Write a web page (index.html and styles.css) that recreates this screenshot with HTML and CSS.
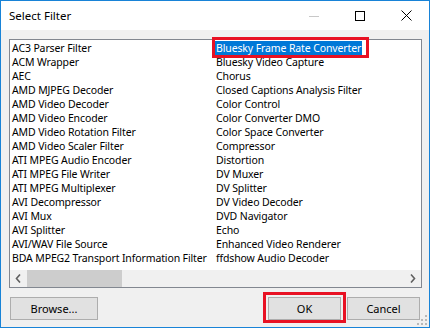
FILE: index.html
```html
<!DOCTYPE html>
<html>
<head>
<meta charset="utf-8">
<link rel="stylesheet" href="styles.css">
</head>
<body>
<div class="window">
  <div class="titlebar">
    <span class="title">Select Filter</span>
    <div class="caps">
      <div class="cap"><svg width="10" height="10" viewBox="0 0 10 10"><path d="M0 5.5H10" stroke="#c8c8c8" stroke-width="1"/></svg></div>
      <div class="cap"><svg width="10" height="10" viewBox="0 0 10 10"><rect x="0.5" y="0.5" width="9" height="9" fill="none" stroke="#000" stroke-width="1"/></svg></div>
      <div class="cap"><svg width="11" height="11" viewBox="0 0 11 11"><path d="M0.5 0.5L10.5 10.5M10.5 0.5L0.5 10.5" stroke="#000" stroke-width="1"/></svg></div>
    </div>
  </div>
  <div class="content">
    <div class="listbox">
      <div class="items">
        <div class="item">AC3 Parser Filter</div>
        <div class="item">ACM Wrapper</div>
        <div class="item">AEC</div>
        <div class="item">AMD MJPEG Decoder</div>
        <div class="item">AMD Video Decoder</div>
        <div class="item">AMD Video Encoder</div>
        <div class="item">AMD Video Rotation Filter</div>
        <div class="item">AMD Video Scaler Filter</div>
        <div class="item">ATI MPEG Audio Encoder</div>
        <div class="item">ATI MPEG File Writer</div>
        <div class="item">ATI MPEG Multiplexer</div>
        <div class="item">AVI Decompressor</div>
        <div class="item">AVI Mux</div>
        <div class="item">AVI Splitter</div>
        <div class="item">AVI/WAV File Source</div>
        <div class="item">BDA MPEG2 Transport Information Filter</div>
        <div class="item"><span class="sel">Bluesky Frame Rate Converter</span></div>
        <div class="item">Bluesky Video Capture</div>
        <div class="item">Chorus</div>
        <div class="item">Closed Captions Analysis Filter</div>
        <div class="item">Color Control</div>
        <div class="item">Color Converter DMO</div>
        <div class="item">Color Space Converter</div>
        <div class="item">Compressor</div>
        <div class="item">Distortion</div>
        <div class="item">DV Muxer</div>
        <div class="item">DV Splitter</div>
        <div class="item">DV Video Decoder</div>
        <div class="item">DVD Navigator</div>
        <div class="item">Echo</div>
        <div class="item">Enhanced Video Renderer</div>
        <div class="item">ffdshow Audio Decoder</div>
      </div>
      <div class="hscroll">
        <div class="arrow"><svg width="7" height="9" viewBox="0 0 7 9"><path d="M5 0.5L1.5 4.5L5 8.5" fill="none" stroke="#606060" stroke-width="1.6"/></svg></div>
        <div class="track"><div class="thumb"></div></div>
        <div class="arrow"><svg width="7" height="9" viewBox="0 0 7 9"><path d="M2 0.5L5.5 4.5L2 8.5" fill="none" stroke="#606060" stroke-width="1.6"/></svg></div>
      </div>
      <div class="mark mark-sel"></div>
    </div>
    <div class="buttons">
      <button class="btn browse">Browse...</button>
      <div class="spacer"></div>
      <div class="okwrap">
        <button class="btn">OK</button>
        <div class="mark mark-ok"></div>
      </div>
      <button class="btn">Cancel</button>
    </div>
    <svg class="grip" width="10" height="10" viewBox="0 0 10 10">
      <rect x="8" y="0" width="2" height="2" fill="#b8b8b8"/>
      <rect x="4" y="4" width="2" height="2" fill="#b8b8b8"/>
      <rect x="8" y="4" width="2" height="2" fill="#b8b8b8"/>
      <rect x="0" y="8" width="2" height="2" fill="#b8b8b8"/>
      <rect x="4" y="8" width="2" height="2" fill="#b8b8b8"/>
      <rect x="8" y="8" width="2" height="2" fill="#b8b8b8"/>
    </svg>
  </div>
</div>
</body>
</html>
```
FILE: styles.css
```css
* { box-sizing: border-box; }
html, body { margin: 0; padding: 0; }
body {
  width: 430px;
  height: 328px;
  font-family: "Noto Sans", "Open Sans", sans-serif;
  font-size: 10.5px;
  letter-spacing: -0.12px;
  color: #000;
  background: #fff;
}
.window {
  width: 430px;
  height: 328px;
  border: 1px solid #1883d7;
  display: flex;
  flex-direction: column;
}
.titlebar {
  height: 29px;
  background: #fff;
  display: flex;
  align-items: center;
  padding-left: 8px;
}
.title {
  font-size: 11.5px;
  letter-spacing: 0;
  color: #000;
  padding-bottom: 1px;
}
.caps {
  margin-left: auto;
  display: flex;
  height: 29px;
}
.cap {
  width: 46px;
  height: 29px;
  display: flex;
  align-items: center;
  justify-content: center;
}
.content {
  flex: 1;
  background: #f0f0f0;
  padding: 9px 7px 0 8px;
  position: relative;
  display: flex;
  flex-direction: column;
}
.listbox {
  position: relative;
  height: 249px;
  border: 1px solid #828790;
  background: #fff;
  display: flex;
  flex-direction: column;
}
.items {
  display: grid;
  grid-template-columns: 204px 204px;
  grid-template-rows: repeat(16, 14px);
  grid-auto-flow: column;
  padding-top: 1px;
}
.item {
  line-height: 14px;
  height: 14px;
  padding-left: 2px;
  white-space: nowrap;
  overflow: hidden;
}
.sel {
  display: inline-block;
  background: #0078d7;
  color: #fff;
  margin-left: -1px;
  padding: 0 1px;
  height: 14px;
}
.hscroll {
  margin-top: auto;
  height: 17px;
  display: flex;
  background: #f0f0f0;
}
.arrow {
  width: 17px;
  height: 17px;
  display: flex;
  align-items: center;
  justify-content: center;
}
.track {
  flex: 1;
  display: flex;
}
.thumb {
  width: 95px;
  background: #cdcdcd;
}
.mark {
  position: absolute;
  border: 3px solid #e81123;
}
.mark-sel {
  left: 202px;
  top: -3px;
  width: 157px;
  height: 21px;
}
.buttons {
  display: flex;
  margin-top: 9px;
  padding-left: 1px;
  padding-right: 2px;
  align-items: flex-start;
}
.spacer { flex: 1; }
.btn {
  font-family: inherit;
  font-size: 11px;
  letter-spacing: 0;
  color: #000;
  height: 23px;
  width: 73px;
  background: #e1e1e1;
  border: 1px solid #adadad;
  padding: 0;
  margin: 0;
}
.browse { width: 88px; }
.okwrap {
  position: relative;
  margin-right: 6px;
}
.okwrap .btn { display: block; }
.mark-ok {
  left: -5px;
  top: -5px;
  width: 83px;
  height: 31px;
}
.grip {
  position: absolute;
  right: 2px;
  bottom: 2px;
}
```
